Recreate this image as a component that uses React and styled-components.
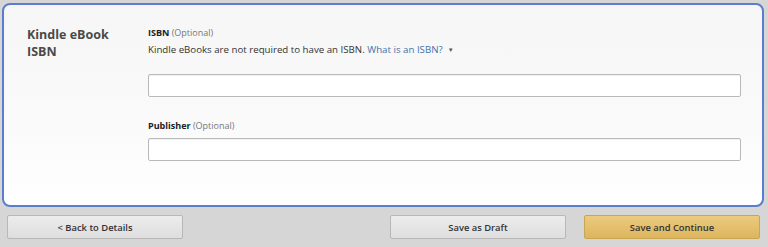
import styled, { createGlobalStyle } from "styled-components";

const GlobalStyle = createGlobalStyle`
  html, body {
    margin: 0;
    padding: 0;
    background: #d6d6d6;
    font-family: "Open Sans", "Noto Sans", sans-serif;
  }
`;

const Page = styled.div`
  width: 768px;
  height: 247px;
  display: flex;
  flex-direction: column;
  background: #d6d6d6;
  overflow: hidden;
`;

const Panel = styled.section`
  margin: 3px 4px 0 2px;
  height: 204px;
  box-sizing: border-box;
  border: 2px solid #5a7dcc;
  border-radius: 8px;
  background: linear-gradient(180deg, #f6f6f6 0%, #fafafa 60%, #ffffff 100%);
  display: grid;
  grid-template-columns: 121px 1fr;
  padding: 21px 21px 0 23px;
`;

const SectionTitle = styled.h2`
  margin: 0;
  font-size: 12.5px;
  line-height: 17px;
  font-weight: 700;
  color: #4a4a4a;
`;

const Fields = styled.div`
  display: flex;
  flex-direction: column;
`;

const Label = styled.div`
  font-size: 9px;
  line-height: 12px;
  font-weight: 700;
  color: #222;
  margin-top: ${(p) => p.$top || 0}px;
`;

const Optional = styled.span`
  font-weight: 400;
  color: #777;
`;

const Hint = styled.p`
  margin: 5px 0 0;
  font-size: 9.7px;
  line-height: 12px;
  color: #333;
`;

const Link = styled.a`
  color: #3f73a8;
  text-decoration: none;
`;

const Caret = styled.span`
  display: inline-block;
  margin-left: 5px;
  font-size: 6px;
  color: #555;
  vertical-align: 1px;
`;

const Input = styled.input`
  box-sizing: border-box;
  width: 100%;
  height: 23px;
  margin-top: ${(p) => p.$top || 0}px;
  border: 1px solid #b9b9b9;
  border-radius: 2px;
  background: #fff;
  box-shadow: inset 0 1px 1px rgba(0, 0, 0, 0.06);
  outline: none;
`;

const Footer = styled.div`
  display: flex;
  align-items: center;
  padding: 8px 8px 0 7px;
  gap: 18px;
`;

const Button = styled.button`
  width: 176px;
  height: 24px;
  box-sizing: border-box;
  border: 1px solid ${(p) => (p.$primary ? "#c9a650" : "#b8b8b8")};
  border-radius: 2px;
  background: ${(p) =>
    p.$primary
      ? "linear-gradient(180deg, #ebcb7e 0%, #deb55e 100%)"
      : "linear-gradient(180deg, #ececec 0%, #dedede 100%)"};
  font-family: "Open Sans", "Noto Sans", sans-serif;
  font-size: 9.4px;
  color: #333;
  font-weight: 600;
  margin-right: ${(p) => (p.$push ? "auto" : "0")};
`;

export default function App() {
  return (
    <Page>
      <GlobalStyle />
      <Panel>
        <SectionTitle>
          Kindle eBook
          <br />
          ISBN
        </SectionTitle>
        <Fields>
          <Label $top={1}>
            ISBN <Optional>(Optional)</Optional>
          </Label>
          <Hint>
            Kindle eBooks are not required to have an ISBN.{" "}
            <Link href="#">What is an ISBN?</Link>
            <Caret>▼</Caret>
          </Hint>
          <Input $top={18} />
          <Label $top={23}>
            Publisher <Optional>(Optional)</Optional>
          </Label>
          <Input $top={6} />
        </Fields>
      </Panel>
      <Footer>
        <Button $push>&lt; Back to Details</Button>
        <Button>Save as Draft</Button>
        <Button $primary>Save and Continue</Button>
      </Footer>
    </Page>
  );
}
